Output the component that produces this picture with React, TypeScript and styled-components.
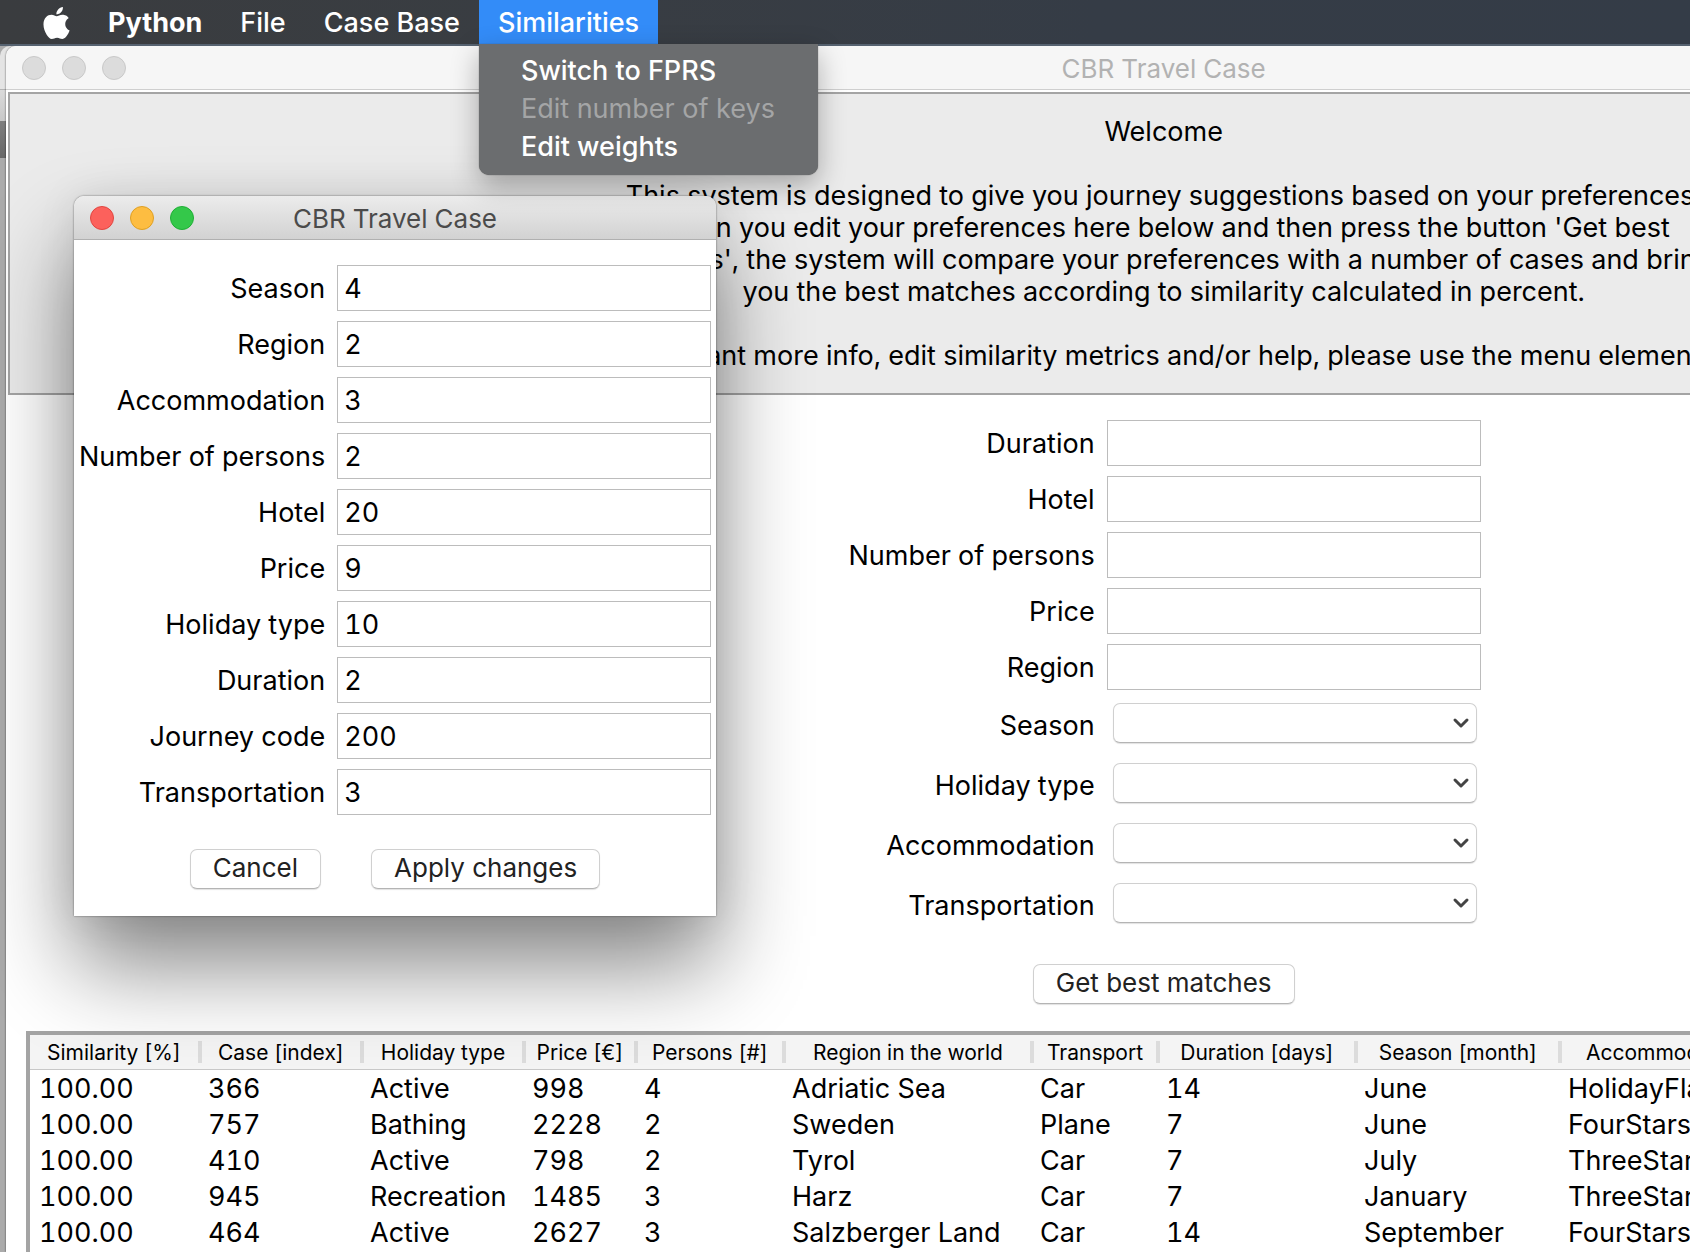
import React, { useState } from "react";
import styled, { createGlobalStyle, css } from "styled-components";
import { ChevronDown } from "lucide-react";

const GlobalStyle = createGlobalStyle`
  * { box-sizing: border-box; }
  body {
    margin: 0;
    overflow: hidden;
    color: #000;
    background: #ababab;
    font-family: Inter, "Liberation Sans", sans-serif;
    font-size: 27px;
    font-variant-numeric: tabular-nums;
    line-height: 32px;
  }
`;

const Desktop = styled.div`
  position: relative;
  height: 100vh;
  overflow: hidden;
  display: flex;
  flex-direction: column;
  background: #ababab;
`;

/* Menu bar */

const MenuBar = styled.nav`
  position: relative;
  z-index: 3;
  flex: none;
  height: 46px;
  display: flex;
  align-items: stretch;
  padding-left: 24px;
  background: linear-gradient(90deg, #3a3c3f, #393d42 30%, #353c46 65%, #343c47);
  border-bottom: 2px solid #566270;
`;

const menuText = css`
  border: 0;
  color: #fff;
  font-family: inherit;
  font-size: 27px;
  font-weight: 500;
`;

const BarItem = styled.button<{ $bold?: boolean; $open?: boolean }>`
  ${menuText}
  display: flex;
  align-items: center;
  padding: 1px 19px 0;
  line-height: 43px;
  background: ${(p) => (p.$open ? "#338cf8" : "transparent")};
  font-weight: ${(p) => (p.$bold ? 700 : 500)};
`;

const MenuHolder = styled.div`
  position: relative;
  display: flex;
`;

const Dropdown = styled.div`
  position: absolute;
  top: 44px;
  left: 0;
  width: 339px;
  display: flex;
  flex-direction: column;
  padding: 8px 0 9px;
  border-radius: 0 0 10px 10px;
  background: #6b6d6f;
  box-shadow: 0 0 1px #444, 0 10px 28px rgba(0, 0, 0, 0.3);
`;

const DropdownItem = styled.button`
  ${menuText}
  padding: 0 42px;
  background: transparent;
  line-height: 38px;
  text-align: left;
  &:disabled { color: #a4a5a6; font-weight: 400; }
`;

/* Windows */

const BackWindow = styled.div`
  position: absolute;
  top: 46px;
  left: 0;
  width: 40px;
  bottom: 0;
  border-top-left-radius: 10px;
  background: linear-gradient(#e4e4e4 0 43px, #b4b4b4 43px 44px, #dadada 44px, #c8c8c8 75px, #7e7e7e 75px, #686868 112px, #ababab 112px);
`;

const MainWindow = styled.main`
  position: relative;
  flex: 1;
  width: 137vw;
  margin-left: 6px;
  display: flex;
  flex-direction: column;
  border-radius: 10px 10px 0 0;
  background: #fff;
  box-shadow: 0 0 2px rgba(0, 0, 0, 0.7);
`;

const TitleBar = styled.header<{ $active?: boolean }>`
  position: relative;
  flex: none;
  height: 44px;
  display: flex;
  align-items: center;
  gap: 16px;
  padding-left: 16px;
  border-radius: 10px 10px 0 0;
  color: ${(p) => (p.$active ? "#4b4b4b" : "#b2b2b2")};
  background: ${(p) => (p.$active ? "linear-gradient(#ececec, #d2d2d2)" : "#f6f6f6")};
  border-bottom: ${(p) => (p.$active ? "1px solid #b0b0b0" : "1px solid #cfcfcf")};
`;

const Title = styled.h1`
  position: absolute;
  inset: 0;
  margin: 0;
  padding-top: 1px;
  text-align: center;
  font-size: 26px;
  font-weight: 400;
  line-height: 44px;
  pointer-events: none;
`;

const Light = styled.button<{ $fill: string; $ring: string }>`
  width: 24px;
  height: 24px;
  padding: 0;
  border: 1px solid ${(p) => p.$ring};
  border-radius: 50%;
  background: ${(p) => p.$fill};
`;

const Intro = styled.section`
  flex: none;
  margin: 2px 2px 0;
  padding: 22px 0 21px;
  border: 2px solid #a4a4a4;
  background: #ebebeb;
  text-align: center;
  p { margin: 0 0 32px; }
  p:last-child { margin: 0; }
`;

const Form = styled.form`
  display: flex;
  flex-direction: column;
  align-items: center;
`;

const Fields = styled.div`
  display: grid;
  grid-template-columns: 248px 374px;
  column-gap: 12px;
`;

const Row = styled.div<{ $tall?: boolean }>`
  display: grid;
  grid-template-columns: subgrid;
  grid-column: 1 / -1;
  align-items: center;
  height: ${(p) => (p.$tall ? 60 : 56)}px;
`;

const Label = styled.label`
  padding-top: 2px;
  text-align: right;
  white-space: nowrap;
`;

const TextBox = styled.input`
  width: 100%;
  height: 46px;
  padding: 0 6px;
  border: 1px solid #bcbcbc;
  border-radius: 0;
  outline: 0;
  background: #fff;
  color: #000;
  font: inherit;
  font-variant-numeric: tabular-nums;
`;

const raised = css`
  height: 40px;
  border: 1px solid #d0d0d0;
  border-bottom-color: #b4b4b4;
  border-radius: 7px;
  background: #fff;
  color: #222;
  box-shadow: 0 1px 1px rgba(0, 0, 0, 0.12);
`;

const SelectHolder = styled.div`
  display: grid;
  align-items: center;
  margin: 0 4px 4px 6px;
  > * { grid-area: 1 / 1; }
  svg { justify-self: end; margin-right: 4px; pointer-events: none; }
`;

const Select = styled.select`
  ${raised}
  appearance: none;
  width: 100%;
  font: inherit;
`;

const Button = styled.button`
  ${raised}
  padding: 0 22px 3px;
  font-family: inherit;
  font-size: 26px;
  line-height: 32px;
  white-space: nowrap;
`;

/* Results */

const Results = styled.div`
  flex: 1;
  margin: 27px 20px 0;
  border: 4px solid #a4a4a4;
  border-bottom: 0;
`;

const Table = styled.table`
  width: 100%;
  table-layout: fixed;
  border-collapse: collapse;
`;

const Th = styled.th`
  position: relative;
  height: 34px;
  padding: 2px 4px 0 0;
  background: #f4f4f4;
  border-bottom: 1px solid #c8c8c8;
  font-size: 21px;
  font-weight: 400;
  line-height: 30px;
  text-align: center;
  white-space: nowrap;
  &::after {
    content: "";
    position: absolute;
    top: 6px;
    right: 0;
    width: 4px;
    height: 22px;
    background: #dcdcdc;
  }
`;

const Td = styled.td`
  height: 36px;
  padding: 2px 0 0 6px;
  line-height: 34px;
  white-space: nowrap;
  &:first-child { padding-left: 9px; }
`;

/* Weights dialog */

const Dialog = styled.section`
  position: absolute;
  z-index: 2;
  top: 196px;
  left: 74px;
  width: 642px;
  border-radius: 10px 10px 0 0;
  background: #fff;
  box-shadow: 0 0 2px rgba(0, 0, 0, 0.6), 0 50px 90px rgba(0, 0, 0, 0.48), 0 0 40px rgba(0, 0, 0, 0.08);
`;

const DialogForm = styled.form`
  padding: 20px 5px 27px;
`;

const DialogFields = styled(Fields)`
  grid-template-columns: 1fr 374px;
`;

const Actions = styled.div`
  display: flex;
  justify-content: center;
  gap: 50px;
  padding-top: 29px;
`;

const introLines = [
  "This system is designed to give you journey suggestions based on your preferences.",
  "When you edit your preferences here below and then press the button 'Get best",
  "matches', the system will compare your preferences with a number of cases and bring",
  "you the best matches according to similarity calculated in percent.",
];

const textFields = ["Duration", "Hotel", "Number of persons", "Price", "Region"];
const choiceFields = ["Season", "Holiday type", "Accommodation", "Transportation"];

const initialWeights: [string, string][] = [
  ["Season", "4"],
  ["Region", "2"],
  ["Accommodation", "3"],
  ["Number of persons", "2"],
  ["Hotel", "20"],
  ["Price", "9"],
  ["Holiday type", "10"],
  ["Duration", "2"],
  ["Journey code", "200"],
  ["Transportation", "3"],
];

const columns: [string, number][] = [
  ["Similarity [%]", 172],
  ["Case [index]", 162],
  ["Holiday type", 162],
  ["Price [€]", 112],
  ["Persons [#]", 148],
  ["Region in the world", 248],
  ["Transport", 126],
  ["Duration [days]", 198],
  ["Season [month]", 204],
  ["Accommodation", 214],
];

const cases = [
  ["100.00", "366", "Active", "998", "4", "Adriatic Sea", "Car", "14", "June", "HolidayFlat"],
  ["100.00", "757", "Bathing", "2228", "2", "Sweden", "Plane", "7", "June", "FourStars"],
  ["100.00", "410", "Active", "798", "2", "Tyrol", "Car", "7", "July", "ThreeStars"],
  ["100.00", "945", "Recreation", "1485", "3", "Harz", "Car", "7", "January", "ThreeStars"],
  ["100.00", "464", "Active", "2627", "3", "Salzberger Land", "Car", "14", "September", "FourStars"],
];

const AppleLogo = () => (
  <svg width="27" height="32" viewBox="0 0 814 1000" fill="#fff" aria-hidden="true">
    <path d="M788.1 340.9c-5.800 4.500-108.200 62.200-108.200 190.500 0 148.400 130.300 200.900 134.200 202.200-.6 3.200-20.700 71.900-68.700 141.900-42.800 61.600-87.500 123.100-155.500 123.100s-85.500-39.500-164-39.500c-76.500 0-103.700 40.800-165.900 40.800s-105.600-57-155.500-127C46.700 790.700 0 663 0 541.800c0-194.400 126.400-297.500 250.800-297.500 66.100 0 121.200 43.400 162.700 43.400 39.500 0 101.100-46 176.300-46 28.500 0 130.900 2.600 198.300 99.200zm-234-181.500c31.100-36.900 53.100-88.100 53.100-139.300 0-7.100-.6-14.300-1.900-20.100-50.600 1.900-110.800 33.700-147.100 75.800-28.500 32.400-55.100 83.600-55.100 135.500 0 7.800 1.300 15.600 1.900 18.100 3.200.6 8.400 1.300 13.600 1.300 45.400 0 102.500-30.400 135.500-71.300z" />
  </svg>
);

const lightNames = ["Close", "Minimize", "Zoom"];
const activeLights = [["#fc615c", "#e14640"], ["#fdbd41", "#dfa023"], ["#34c84a", "#1faf35"]];
const idleLight = ["#dcdcdc", "#c9c9c9"];

function WindowTitle({ active }: { active?: boolean }) {
  return (
    <TitleBar $active={active}>
      {lightNames.map((name, i) => {
        const [fill, ring] = active ? activeLights[i] : idleLight;
        return <Light key={name} type="button" aria-label={name} $fill={fill} $ring={ring} />;
      })}
      <Title>CBR Travel Case</Title>
    </TitleBar>
  );
}

function WeightsDialog() {
  const [weights, setWeights] = useState(initialWeights);
  const change = (index: number, value: string) =>
    setWeights(weights.map(([n, v], i) => [n, i === index ? value : v] as [string, string]));
  return (
    <Dialog>
      <WindowTitle active />
      <DialogForm onSubmit={(e) => e.preventDefault()}>
        <DialogFields>
          {weights.map(([name, value], i) => (
            <Row key={name}>
              <Label htmlFor={`weight-${i}`}>{name}</Label>
              <TextBox id={`weight-${i}`} value={value} onChange={(e) => change(i, e.target.value)} />
            </Row>
          ))}
        </DialogFields>
        <Actions>
          <Button type="button">Cancel</Button>
          <Button type="submit">Apply changes</Button>
        </Actions>
      </DialogForm>
    </Dialog>
  );
}

const MatchButton = styled(Button)`
  margin-top: 29px;
`;

const MainForm = styled(Form)`
  padding-top: 20px;
`;

export default function App() {
  return (
    <Desktop>
      <GlobalStyle />
      <MenuBar>
        <BarItem aria-label="Apple"><AppleLogo /></BarItem>
        <BarItem $bold>Python</BarItem>
        <BarItem>File</BarItem>
        <BarItem>Case Base</BarItem>
        <MenuHolder>
          <BarItem $open>Similarities</BarItem>
          <Dropdown>
            <DropdownItem>Switch to FPRS</DropdownItem>
            <DropdownItem disabled>Edit number of keys</DropdownItem>
            <DropdownItem>Edit weights</DropdownItem>
          </Dropdown>
        </MenuHolder>
      </MenuBar>
      <BackWindow />
      <MainWindow>
        <WindowTitle />
        <Intro>
          <p>Welcome</p>
          <p>
            {introLines.map((line) => (
              <React.Fragment key={line}>{line}<br /></React.Fragment>
            ))}
          </p>
          <p>If you want more info, edit similarity metrics and/or help, please use the menu elements.</p>
        </Intro>
        <MainForm onSubmit={(e) => e.preventDefault()}>
          <Fields>
            {textFields.map((name) => (
              <Row key={name}>
                <Label htmlFor={`pref-${name}`}>{name}</Label>
                <TextBox id={`pref-${name}`} />
              </Row>
            ))}
            {choiceFields.map((name) => (
              <Row key={name} $tall>
                <Label htmlFor={`pref-${name}`}>{name}</Label>
                <SelectHolder>
                  <Select id={`pref-${name}`}><option value="" /></Select>
                  <ChevronDown size={24} strokeWidth={3} color="#444" />
                </SelectHolder>
              </Row>
            ))}
          </Fields>
          <MatchButton type="submit">Get best matches</MatchButton>
        </MainForm>
        <Results>
          <Table>
            <colgroup>
              {columns.map(([name, width]) => <col key={name} style={{ width }} />)}
              <col />
            </colgroup>
            <thead>
              <tr>
                {columns.map(([name]) => <Th key={name}>{name}</Th>)}
                <Th as="td" />
              </tr>
            </thead>
            <tbody>
              {cases.map((row) => (
                <tr key={row[1]}>
                  {row.map((cell, i) => <Td key={i}>{cell}</Td>)}
                  <Td />
                </tr>
              ))}
            </tbody>
          </Table>
        </Results>
      </MainWindow>
      <WeightsDialog />
    </Desktop>
  );
}
